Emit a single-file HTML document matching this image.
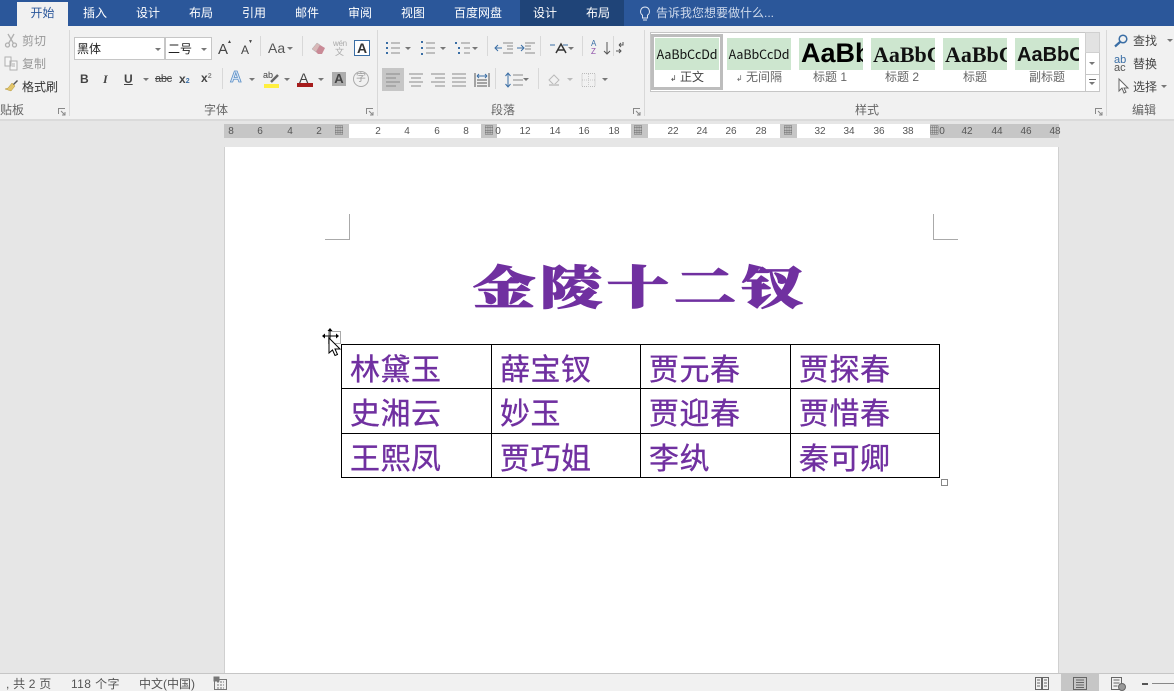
<!DOCTYPE html>
<html><head><meta charset="utf-8"><style>
*{box-sizing:border-box}
html,body{margin:0;padding:0}
body{width:1174px;height:691px;overflow:hidden;position:relative;background:#e6e6e6;font-family:"Liberation Sans","Noto Sans CJK SC",sans-serif;font-size:12px;color:#444}
.a{position:absolute;white-space:nowrap;line-height:1}
.tab{position:absolute;top:0;height:26px;line-height:27px;color:#fff;font-size:12px;text-align:center;white-space:nowrap}
.sep{position:absolute;width:1px;background:#d8d8d8}
.st{position:absolute;top:38px;width:64px;height:32px;background:#cde6cf;color:#111;overflow:hidden;white-space:nowrap;text-align:center}
.sl{position:absolute;top:70px;font-size:12px;color:#666;text-align:center;width:70px;line-height:15px;white-space:nowrap}
.rn{position:absolute;top:126px;font-size:10px;line-height:11px;color:#555;width:20px;text-align:center}
.rb{position:absolute;top:124px;height:14px;background:#c6c6c6}
.td{position:absolute;font-size:30px;line-height:34px;color:#7030a0;letter-spacing:.5px;white-space:nowrap;font-family:"Noto Sans CJK SC",sans-serif;-webkit-text-stroke:.35px #7030a0}
.ln{position:absolute;background:#000}
.dd{position:absolute;width:0;height:0;border:3px solid transparent;border-top:3px solid #777;border-bottom:0}
svg{position:absolute;overflow:visible}
</style></head><body>
<!-- title bar -->
<div class="a" style="left:0;top:0;width:1174px;height:26px;background:#2b579a"></div>
<div class="a" style="left:520px;top:0;width:104px;height:26px;background:#1f4478"></div>
<div class="a" style="left:17px;top:2px;width:51px;height:24px;background:#f1f1f1"></div>
<div class="tab" style="left:17px;width:51px;color:#2b579a">开始</div>
<div class="tab" style="left:70px;width:50px">插入</div>
<div class="tab" style="left:123px;width:50px">设计</div>
<div class="tab" style="left:176px;width:50px">布局</div>
<div class="tab" style="left:229px;width:50px">引用</div>
<div class="tab" style="left:282px;width:50px">邮件</div>
<div class="tab" style="left:335px;width:50px">审阅</div>
<div class="tab" style="left:388px;width:50px">视图</div>
<div class="tab" style="left:443px;width:70px">百度网盘</div>
<div class="tab" style="left:520px;width:50px">设计</div>
<div class="tab" style="left:573px;width:50px">布局</div>
<svg style="left:638px;top:6px" width="14" height="16" viewBox="0 0 14 16" fill="none" stroke="#dfe6f2" stroke-width="1"><path d="M7 1a4.500 4.500 0 0 0-2.500 8.200V12h5V9.200A4.500 4.500 0 0 0 7 1zM5 14h4"/></svg>
<div class="tab" style="left:656px;color:#cfdaec">告诉我您想要做什么...</div>

<!-- ribbon -->
<div class="a" style="left:0;top:26px;width:1174px;height:94px;background:#f1f1f1"></div>
<div class="a" style="left:0;top:119px;width:1174px;height:2px;background:#dadada"></div>
<div class="sep" style="left:69px;top:30px;height:86px"></div>
<div class="sep" style="left:377px;top:30px;height:86px"></div>
<div class="sep" style="left:644px;top:30px;height:86px"></div>
<div class="sep" style="left:1106px;top:30px;height:86px"></div>

<!-- clipboard -->
<svg style="left:4px;top:33px" width="14" height="15" viewBox="0 0 14 15" fill="none" stroke="#b0b0b0" stroke-width="1.300"><circle cx="3.500" cy="12" r="2"/><circle cx="10.500" cy="12" r="2"/><path d="M4.500 10.500L10 1M9.500 10.500L4 1"/></svg>
<div class="a" style="left:22px;top:35px;color:#999">剪切</div>
<svg style="left:4px;top:56px" width="14" height="15" viewBox="0 0 14 15" fill="#f6f6f6" stroke="#b0b0b0"><path d="M1 1h6v9H1zM6 5h7v9H6z"/><path d="M8 8h3M8 10h3" fill="none"/></svg>
<div class="a" style="left:22px;top:58px;color:#999">复制</div>
<svg style="left:4px;top:79px" width="15" height="14" viewBox="0 0 15 14"><path d="M8 4l3 3-4 5-6-2 3-1z" fill="#e2c56a" stroke="#b3953d" stroke-width=".5"/><path d="M9 5l4-4 1 1-4 4z" fill="#555"/></svg>
<div class="a" style="left:22px;top:81px;color:#333">格式刷</div>
<div class="a" style="left:-12px;top:104px;color:#666">粘贴板</div>
<svg style="left:58px;top:108px" width="8" height="8" fill="none" stroke="#888"><path d="M.500 6V.500H7M3 3l4 4M7 4v3H4"/></svg>

<!-- font -->
<div class="a" style="left:74px;top:37px;width:91px;height:23px;background:#fff;border:1px solid #c6c6c6"></div>
<div class="a" style="left:77px;top:43px;font-size:12px;color:#222">黑体</div>
<div class="dd" style="left:155px;top:48px"></div>
<div class="a" style="left:165px;top:37px;width:47px;height:23px;background:#fff;border:1px solid #c6c6c6"></div>
<div class="a" style="left:168px;top:43px;font-size:12px;color:#222">二号</div>
<div class="dd" style="left:201px;top:48px"></div>
<div class="a" style="left:218px;top:42px;font-size:15px;color:#444">A</div>
<div class="a" style="left:241px;top:44px;font-size:12px;color:#444">A</div>
<div class="a" style="left:227px;top:40px;font-size:5px;color:#444">▲</div>
<div class="a" style="left:248px;top:40px;font-size:5px;color:#444">▼</div>
<div class="sep" style="left:260px;top:36px;height:20px"></div>
<div class="a" style="left:268px;top:41px;font-size:14px;color:#555">Aa</div>
<div class="dd" style="left:287px;top:47px"></div>
<div class="sep" style="left:302px;top:36px;height:20px"></div>
<svg style="left:311px;top:40px" width="16" height="16" viewBox="0 0 16 16"><path d="M1 9l5-6 3 2-4 7z" fill="#d9b8b8" stroke="#aaa" stroke-width=".5"/><path d="M5 12l4-7 5 3-3 6H7z" fill="#c98a96"/></svg>
<div class="a" style="left:333px;top:40px;font-size:8px;color:#aaa;letter-spacing:-.3px">wén</div>
<div class="a" style="left:335px;top:48px;font-size:9px;color:#aaa">文</div>
<div class="a" style="left:354px;top:40px;width:16px;height:16px;border:1px solid #3a6ea5;background:#fff;color:#333;font-size:14px;font-weight:bold;line-height:15px;text-align:center">A</div>

<div class="a" style="left:80px;top:73px;font-size:12px;font-weight:bold;color:#444">B</div>
<div class="a" style="left:103px;top:73px;font-size:12px;font-style:italic;font-family:'Liberation Serif';font-weight:bold;color:#444">I</div>
<div class="a" style="left:124px;top:73px;font-size:12px;font-weight:bold;color:#444;text-decoration:underline">U</div>
<div class="dd" style="left:143px;top:78px"></div>
<div class="a" style="left:155px;top:74px;font-size:11px;color:#444;letter-spacing:-.3px;text-decoration:line-through">abc</div>
<div class="a" style="left:179px;top:73px;font-size:12px;font-weight:bold;color:#444">x<span style="font-size:7px;color:#3a6ea5">2</span></div>
<div class="a" style="left:201px;top:72px;font-size:12px;font-weight:bold;color:#444">x<span style="font-size:7px;vertical-align:4px;color:#888">2</span></div>
<div class="sep" style="left:222px;top:68px;height:21px"></div>
<div class="a" style="left:230px;top:70px;font-size:16px;font-weight:bold;color:#dbe8f6;-webkit-text-stroke:.8px #5b8fc7">A</div>
<div class="dd" style="left:249px;top:78px"></div>
<div class="a" style="left:263px;top:71px;font-size:9px;color:#444">ab</div>
<svg style="left:264px;top:72px" width="16" height="16" viewBox="0 0 16 16"><path d="M7 10l7-7" stroke="#666" stroke-width="2.500"/><rect x="0" y="12" width="15" height="4" fill="#ffef3f"/></svg>
<div class="dd" style="left:284px;top:78px"></div>
<div class="a" style="left:299px;top:71px;font-size:14px;color:#444">A</div>
<div class="a" style="left:297px;top:83px;width:16px;height:4px;background:#a61c1c"></div>
<div class="dd" style="left:318px;top:78px"></div>
<div class="a" style="left:332px;top:72px;width:14px;height:14px;background:#adadad;color:#444;font-size:13px;font-weight:bold;line-height:14px;text-align:center">A</div>
<div class="a" style="left:353px;top:71px;width:16px;height:16px;border:1px solid #aaa;border-radius:50%;color:#999;font-size:10px;line-height:14px;text-align:center">字</div>
<div class="a" style="left:204px;top:104px;color:#666">字体</div>
<svg style="left:366px;top:108px" width="8" height="8" fill="none" stroke="#888"><path d="M.500 6V.500H7M3 3l4 4M7 4v3H4"/></svg>

<!-- paragraph row 1 -->
<svg style="left:385px;top:40px" width="250" height="16" viewBox="0 0 250 16" fill="none" stroke="#8a8a8a">
<path d="M6 3h9M6 8h9M6 13h9"/><path d="M1 3h2M1 8h2M1 13h2" stroke="#3a6ea5" stroke-width="2"/>
<path d="M41 3h9M41 8h9M41 13h9"/><path d="M36 2h2M36 8h2M36 14h2" stroke="#3a6ea5" stroke-width="2"/>
<path d="M76 3h9M79 8h6M79 13h6"/><path d="M70 3h2M73 8h2M73 13h2" stroke="#3a6ea5" stroke-width="2"/>
<path d="M118 3h10M122 6h6M122 9h6M118 13h10"/><path d="M110 8h7M113 5l-3 3 3 3" stroke="#3a6ea5"/>
<path d="M140 3h10M140 6h6M140 9h6M140 13h10"/><path d="M132 8h7M136 5l3 3-3 3" stroke="#3a6ea5"/>
<path d="M171 13l5-9 5 9M173 10h6" stroke="#333" stroke-width="1.500"/><path d="M165 5h5M183 5h-5" stroke="#3a6ea5"/>
<path d="M222 2v12M219 11l3 3 3-3" stroke="#555"/><path d="M234 5h4V2M234 5l2-2M234 5l2 2M231 11h5M234 9l2 2-2 2" stroke="#555"/>
</svg>
<div class="dd" style="left:405px;top:47px"></div>
<div class="dd" style="left:440px;top:47px"></div>
<div class="dd" style="left:472px;top:47px"></div>
<div class="dd" style="left:568px;top:47px"></div>
<div class="a" style="left:591px;top:40px;font-size:8px;line-height:8px;color:#3a6ea5">A</div>
<div class="a" style="left:591px;top:48px;font-size:8px;line-height:8px;color:#8d4fa8">Z</div>
<div class="sep" style="left:487px;top:36px;height:20px"></div>
<div class="sep" style="left:540px;top:36px;height:20px"></div>
<div class="sep" style="left:582px;top:36px;height:20px"></div>
<div class="sep" style="left:613px;top:36px;height:20px"></div>

<!-- paragraph row 2 -->
<div class="a" style="left:382px;top:68px;width:22px;height:23px;background:#c6c6c6"></div>
<svg style="left:385px;top:72px" width="230" height="16" viewBox="0 0 230 16" fill="none" stroke="#8a8a8a">
<path d="M1 2h14M1 6h10M1 10h14M1 14h10"/>
<path d="M24 2h14M26 6h10M24 10h14M26 14h10"/>
<path d="M46 2h14M50 6h10M46 10h14M50 14h10"/>
<path d="M67 2h14M67 6h14M67 10h14M67 14h14"/>
<path d="M90 1v14M104 1v14M92 11h10M92 8h10M92 14h10" stroke="#555"/><path d="M92 4h10M92 4l2-2M92 4l2 2M102 4l-2-2M102 4l-2 2" stroke="#3a6ea5"/>
<path d="M128 3h10M128 8h10M128 13h10"/><path d="M123 2v12M120.500 4l2.500-3 2.500 3M120.500 12l2.500 3 2.500-3" stroke="#3a6ea5"/>
<path d="M164 8l5-5 5 5-5 5z" stroke="#bbb"/><path d="M164 13h10" stroke="#ccc" stroke-width="2"/>
<rect x="197" y="1.500" width="13" height="13" stroke="#bbb" stroke-dasharray="1 1"/><path d="M203.500 2v13M197 8h13" stroke="#ccc" stroke-dasharray="1 1"/>
</svg>
<div class="sep" style="left:495px;top:68px;height:21px"></div>
<div class="sep" style="left:538px;top:68px;height:21px"></div>
<div class="dd" style="left:523px;top:78px"></div>
<div class="dd" style="left:567px;top:78px;border-top-color:#bbb"></div>
<div class="dd" style="left:602px;top:78px"></div>
<div class="a" style="left:491px;top:104px;color:#666">段落</div>
<svg style="left:633px;top:108px" width="8" height="8" fill="none" stroke="#888"><path d="M.500 6V.500H7M3 3l4 4M7 4v3H4"/></svg>

<!-- styles gallery -->
<div class="a" style="left:650px;top:32px;width:450px;height:60px;background:#fff;border:1px solid #c6c6c6"></div>
<div class="a" style="left:651px;top:34px;width:72px;height:56px;border:3px solid #bdbdbd;background:#fff"></div>
<div class="st" style="left:655px;font-size:12.500px;line-height:32px;letter-spacing:-.1px;font-family:'Noto Sans CJK SC','Liberation Sans',sans-serif">AaBbCcDd</div>
<div class="sl" style="left:652px;color:#444"><span style="font-size:8px">↲</span> 正文</div>
<div class="st" style="left:727px;font-size:12.500px;line-height:32px;letter-spacing:-.1px;font-family:'Noto Sans CJK SC','Liberation Sans',sans-serif">AaBbCcDd</div>
<div class="sl" style="left:724px"><span style="font-size:8px">↲</span> 无间隔</div>
<div class="st" style="left:799px;font-size:27px;font-weight:bold;line-height:31px;color:#000;text-align:left;padding-left:2px">AaBb</div>
<div class="sl" style="left:795px">标题 1</div>
<div class="st" style="left:871px;font-size:22px;font-weight:bold;line-height:34px;font-family:'Liberation Serif';text-align:left;padding-left:2px">AaBbC</div>
<div class="sl" style="left:867px">标题 2</div>
<div class="st" style="left:943px;font-size:22px;font-weight:bold;line-height:34px;font-family:'Liberation Serif';text-align:left;padding-left:2px">AaBbC</div>
<div class="sl" style="left:940px">标题</div>
<div class="st" style="left:1015px;font-size:20px;font-weight:bold;line-height:34px;text-align:left;padding-left:2px">AaBbCc</div>
<div class="sl" style="left:1012px">副标题</div>
<div class="a" style="left:1085px;top:32px;width:15px;height:60px;background:#fff;border:1px solid #c6c6c6"></div>
<div class="a" style="left:1085px;top:32px;width:15px;height:21px;background:#e2e2e2;border:1px solid #d0d0d0"></div>
<div class="a" style="left:1085px;top:74px;width:15px;height:1px;background:#c6c6c6"></div>
<div class="dd" style="left:1089px;top:62px"></div>
<div class="a" style="left:1089px;top:79px;width:7px;height:1px;background:#666"></div>
<div class="dd" style="left:1089px;top:82px"></div>
<div class="a" style="left:855px;top:104px;color:#666">样式</div>
<svg style="left:1095px;top:108px" width="8" height="8" fill="none" stroke="#888"><path d="M.500 6V.500H7M3 3l4 4M7 4v3H4"/></svg>

<!-- editing -->
<svg style="left:1114px;top:33px" width="15" height="15" viewBox="0 0 15 15" fill="none" stroke="#3a6ea5" stroke-width="1.500"><circle cx="9" cy="6" r="3.800"/><path d="M6 9l-5 4.500" stroke-width="2.200"/></svg>
<div class="a" style="left:1133px;top:35px;color:#444">查找</div>
<div class="dd" style="left:1167px;top:39px"></div>
<div class="a" style="left:1114px;top:56px;font-size:11px;line-height:8px;color:#3a6ea5">ab<br><span style="color:#555">ac</span></div>
<div class="a" style="left:1133px;top:58px;color:#444">替换</div>
<svg style="left:1118px;top:78px" width="12" height="16" viewBox="0 0 12 16" fill="#fff" stroke="#666"><path d="M1 1v12l3-3 2 5 2-1-2-4h4z"/></svg>
<div class="a" style="left:1133px;top:81px;color:#444">选择</div>
<div class="dd" style="left:1161px;top:85px"></div>
<div class="a" style="left:1132px;top:104px;color:#666">编辑</div>

<!-- ruler -->
<div class="a" style="left:224px;top:124px;width:835px;height:14px;background:#fff"></div>
<div class="rb" style="left:224px;width:125px"></div>
<div class="rb" style="left:481px;width:16px"></div>
<div class="rb" style="left:631px;width:17px"></div>
<div class="rb" style="left:780px;width:17px"></div>
<div class="rb" style="left:930px;width:129px"></div>
<div class="rn" style="left:221px">8</div><div class="rn" style="left:250px">6</div><div class="rn" style="left:280px">4</div><div class="rn" style="left:309px">2</div><div class="rn" style="left:329px">▦</div>
<div class="rn" style="left:368px">2</div><div class="rn" style="left:397px">4</div><div class="rn" style="left:427px">6</div><div class="rn" style="left:456px">8</div><div class="rn" style="left:479px">▦</div><div class="rn" style="left:488px">0</div>
<div class="rn" style="left:515px">12</div><div class="rn" style="left:545px">14</div><div class="rn" style="left:574px">16</div><div class="rn" style="left:604px">18</div><div class="rn" style="left:628px">▦</div>
<div class="rn" style="left:663px">22</div><div class="rn" style="left:692px">24</div><div class="rn" style="left:721px">26</div><div class="rn" style="left:751px">28</div><div class="rn" style="left:778px">▦</div>
<div class="rn" style="left:810px">32</div><div class="rn" style="left:839px">34</div><div class="rn" style="left:869px">36</div><div class="rn" style="left:898px">38</div><div class="rn" style="left:927px">▦0</div>
<div class="rn" style="left:957px">42</div><div class="rn" style="left:987px">44</div><div class="rn" style="left:1016px">46</div><div class="rn" style="left:1045px">48</div>

<!-- page -->
<div class="a" style="left:224px;top:147px;width:835px;height:526px;background:#fff;border-left:1px solid #d0d0d0;border-right:1px solid #d0d0d0"></div>
<div class="a" style="left:325px;top:239px;width:25px;height:1px;background:#aaa"></div>
<div class="a" style="left:349px;top:214px;width:1px;height:26px;background:#aaa"></div>
<div class="a" style="left:933px;top:239px;width:25px;height:1px;background:#aaa"></div>
<div class="a" style="left:933px;top:214px;width:1px;height:26px;background:#aaa"></div>

<!-- title -->
<div class="a" style="left:473px;top:254px;font-size:62px;line-height:62px;font-weight:900;color:#7030a0;letter-spacing:5px;font-family:'Noto Serif CJK SC',serif;-webkit-text-stroke:1.6px #7030a0;transform:scaleY(.74);transform-origin:0 50%">金陵十二钗</div>

<!-- table -->
<div class="ln" style="left:341px;top:344px;width:599px;height:1px"></div>
<div class="ln" style="left:341px;top:388px;width:599px;height:1px"></div>
<div class="ln" style="left:341px;top:433px;width:599px;height:1px"></div>
<div class="ln" style="left:341px;top:477px;width:599px;height:1px"></div>
<div class="ln" style="left:341px;top:344px;width:1px;height:134px"></div>
<div class="ln" style="left:491px;top:344px;width:1px;height:134px"></div>
<div class="ln" style="left:640px;top:344px;width:1px;height:134px"></div>
<div class="ln" style="left:790px;top:344px;width:1px;height:134px"></div>
<div class="ln" style="left:939px;top:344px;width:1px;height:134px"></div>
<div class="td" style="left:350px;top:350px">林黛玉</div><div class="td" style="left:500px;top:350px">薛宝钗</div><div class="td" style="left:649px;top:350px">贾元春</div><div class="td" style="left:799px;top:350px">贾探春</div>
<div class="td" style="left:350px;top:394px">史湘云</div><div class="td" style="left:500px;top:394px">妙玉</div><div class="td" style="left:649px;top:394px">贾迎春</div><div class="td" style="left:799px;top:394px">贾惜春</div>
<div class="td" style="left:350px;top:439px">王熙凤</div><div class="td" style="left:500px;top:439px">贾巧姐</div><div class="td" style="left:649px;top:439px">李纨</div><div class="td" style="left:799px;top:439px">秦可卿</div>
<div class="a" style="left:941px;top:479px;width:7px;height:7px;background:#fff;border:1px solid #888"></div>
<div class="a" style="left:328px;top:331px;width:13px;height:13px;background:#fff;border:1px solid #aaa"></div>
<svg style="left:321px;top:327px" width="22" height="30" viewBox="0 0 22 30" fill="none"><path d="M3 9h13M9 3v12" stroke="#000"/><path d="M9 1l-2.500 3h5zM1 9l3-2.500v5zM18 9l-3-2.500v5z" fill="#000"/><path d="M8 11v15l3.500-3 2.500 5.500 2.500-1-2.500-5.500h5z" fill="#fff" stroke="#000"/></svg>

<!-- status bar -->
<div class="a" style="left:0;top:673px;width:1174px;height:18px;background:#f1f1f1;border-top:1px solid #c6c6c6"></div>
<div class="a" style="left:6px;top:678px;color:#555;letter-spacing:.2px">, 共 2 页</div>
<div class="a" style="left:71px;top:678px;color:#555;letter-spacing:.4px">118 个字</div>
<div class="a" style="left:139px;top:678px;color:#555">中文(中国)</div>
<svg style="left:214px;top:677px" width="14" height="13" fill="none" stroke="#777"><rect x=".5" y="2.500" width="12" height="10"/><path d="M3 5h7M3 8h7M3 11h7" stroke-dasharray="2 1"/><rect x="0" y="0" width="5" height="4" fill="#777"/></svg>
<div class="a" style="left:1061px;top:674px;width:38px;height:17px;background:#c6c6c6"></div>
<svg style="left:1035px;top:677px" width="14" height="13" fill="none" stroke="#666"><path d="M.5.500h6v12h-6zM7.500.500h6v12h-6zM2 3h3M2 6h3M2 9h3M9 3h3M9 6h3M9 9h3"/></svg>
<svg style="left:1073px;top:677px" width="14" height="13" fill="none" stroke="#666"><path d="M.5.500h13v12H.5zM3 3h8M3 5.500h8M3 8h8M3 10.500h8"/></svg>
<svg style="left:1111px;top:677px" width="15" height="13" fill="none" stroke="#666"><path d="M.5.500h10v12H.5zM2.500 3h6M2.500 6h6M2.500 9h4"/><circle cx="11" cy="10" r="3.500" fill="#999"/></svg>
<div class="a" style="left:1142px;top:683px;width:6px;height:2px;background:#555"></div>
<div class="a" style="left:1152px;top:683px;width:22px;height:1px;background:#888"></div>
</body></html>
